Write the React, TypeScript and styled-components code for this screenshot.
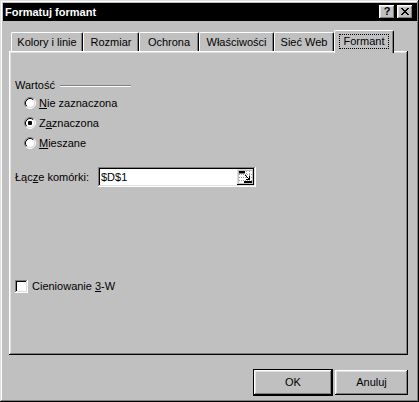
import React from "react";
import styled, { createGlobalStyle } from "styled-components";

const GlobalStyle = createGlobalStyle`
  html, body { margin: 0; padding: 0; background: #c0c0c0; }
  body { font-family: "Liberation Sans", Arial, sans-serif; font-size: 11px; color: #000; }
  * { box-sizing: border-box; }
`;

const raised = `box-shadow: inset -1px -1px #000, inset 1px 1px #fff, inset -2px -2px #808080, inset 2px 2px #dfdfdf;`;
const sunken = `box-shadow: inset -1px -1px #fff, inset 1px 1px #808080, inset -2px -2px #dfdfdf, inset 2px 2px #000;`;

const Window = styled.div`
  width: 419px;
  height: 402px;
  background: #c0c0c0;
  padding: 3px 2px 3px 3px;
  box-shadow: inset -1px -1px #000, inset 1px 1px #dfdfdf, inset -2px -2px #808080, inset 2px 2px #fff;
  display: flex;
  flex-direction: column;
  overflow: hidden;
`;

const TitleBar = styled.div`
  height: 18px;
  background: #000;
  display: flex;
  align-items: center;
  padding: 0 4px 0 2px;
`;

const Title = styled.span`
  flex: 1;
  color: #fff;
  font-weight: bold;
  font-size: 11px;
  line-height: 13px;
`;

const CaptionButtons = styled.div`
  display: flex;
  gap: 2px;
`;

const CaptionButton = styled.div`
  width: 16px;
  height: 14px;
  background: #c0c0c0;
  ${raised}
  display: flex;
  align-items: center;
  justify-content: center;
  font-weight: bold;
  font-size: 11px;
  line-height: 11px;
  padding-bottom: 1px;
`;

const Body = styled.div`
  display: flex;
  flex-direction: column;
  padding: 9px 0 0 6px;
`;

const TabStrip = styled.div`
  display: flex;
  align-items: flex-end;
  height: 21px;
  padding-left: 2px;
`;

const Tab = styled.div<{ $w: number; $active?: boolean }>`
  width: ${(p) => p.$w}px;
  height: ${(p) => (p.$active ? 23 : 19)}px;
  margin-bottom: ${(p) => (p.$active ? -2 : 0)}px;
  position: relative;
  z-index: ${(p) => (p.$active ? 1 : 0)};
  background: #c0c0c0;
  border-top: 1px solid #fff;
  border-left: 1px solid #fff;
  border-right: 1px solid #000;
  border-radius: 2px 2px 0 0;
  box-shadow: inset -1px 0 #808080;
  display: flex;
  justify-content: center;
  align-items: flex-start;
  padding-top: ${(p) => (p.$active ? 3 : 3)}px;
  line-height: 13px;
  white-space: nowrap;
`;

const Focus = styled.span`
  border: 1px dotted #000;
  padding: 0 4px;
  line-height: 13px;
`;

const Panel = styled.div`
  width: 399px;
  height: 304px;
  background: #c0c0c0;
  box-shadow: inset -1px -1px #000, inset 1px 1px #fff, inset -2px -2px #808080, inset 2px 2px #dfdfdf;
  padding: 28px 0 0 6px;
  display: flex;
  flex-direction: column;
`;

const GroupHeader = styled.div`
  display: grid;
  grid-template-columns: 45px 71px;
  align-items: center;
  height: 13px;
  line-height: 13px;
`;

const GroupLine = styled.div`
  height: 2px;
  border-top: 1px solid #808080;
  border-bottom: 1px solid #fff;
`;

const RadioList = styled.div`
  display: flex;
  flex-direction: column;
  margin: 1px 0 0 9px;
`;

const OptionRow = styled.label`
  display: flex;
  align-items: center;
  gap: 3px;
  height: 20px;
  line-height: 13px;
`;

const U = styled.span`
  text-decoration: underline;
`;

const FieldRow = styled.div`
  display: grid;
  grid-template-columns: 83px 158px;
  align-items: center;
  margin-top: 14px;
  line-height: 13px;
`;

const RefInput = styled.div`
  height: 20px;
  background: #fff;
  ${sunken}
  padding: 2px;
  display: flex;
  align-items: center;
`;

const InputText = styled.span`
  flex: 1;
  padding-left: 1px;
  line-height: 13px;
`;

const RefButton = styled.div`
  width: 17px;
  height: 16px;
  display: flex;
`;

const CheckRow = styled.label`
  display: flex;
  align-items: center;
  gap: 4px;
  margin-top: 93px;
  line-height: 13px;
`;

const CheckBox = styled.span`
  width: 13px;
  height: 13px;
  background: #fff;
  ${sunken}
`;

const ButtonRow = styled.div`
  width: 399px;
  display: flex;
  justify-content: flex-end;
  align-items: flex-start;
  gap: 2px;
  margin-top: 14px;
`;

const DialogButton = styled.div<{ $default?: boolean; $w: number }>`
  width: ${(p) => p.$w}px;
  height: ${(p) => (p.$default ? 27 : 25)}px;
  margin-top: ${(p) => (p.$default ? 0 : 1)}px;
  background: #c0c0c0;
  border: ${(p) => (p.$default ? "1px solid #000" : "none")};
  ${raised}
  display: flex;
  align-items: center;
  justify-content: center;
  line-height: 13px;
`;

const Radio = ({ checked }: { checked?: boolean }) => (
  <svg width="12" height="12" viewBox="0 0 12 12">
    <circle cx="6" cy="6" r="4.5" fill="#fff" />
    <path d="M2.11 9.89 A5.5 5.5 0 0 1 9.89 2.11" stroke="#808080" fill="none" />
    <path d="M9.89 2.11 A5.5 5.5 0 0 1 2.11 9.89" stroke="#fff" fill="none" />
    <path d="M2.82 9.18 A4.5 4.5 0 0 1 9.18 2.82" stroke="#000" fill="none" />
    <path d="M9.18 2.82 A4.5 4.5 0 0 1 2.82 9.18" stroke="#dfdfdf" fill="none" />
    {checked && <rect x="4" y="4" width="4" height="4" rx="1" fill="#000" />}
  </svg>
);

const CloseGlyph = () => (
  <svg width="8" height="7" viewBox="0 0 8 7" shapeRendering="crispEdges">
    <path d="M0 0h2v1h-2zM6 0h2v1h-2zM1 1h2v1h-2zM5 1h2v1h-2zM2 2h4v1h-4zM3 3h2v1h-2zM2 4h4v1h-4zM1 5h2v1h-2zM5 5h2v1h-2zM0 6h2v1h-2zM6 6h2v1h-2z" fill="#000" />
  </svg>
);

const RefIcon = () => (
  <svg width="17" height="16" viewBox="0 0 17 16" shapeRendering="crispEdges">
    <rect x="0" y="0" width="17" height="16" fill="#c0c0c0" />
    <rect x="0" y="0" width="16" height="1" fill="#dfdfdf" />
    <rect x="0" y="0" width="1" height="15" fill="#dfdfdf" />
    <rect x="16" y="0" width="1" height="16" fill="#000" />
    <rect x="0" y="15" width="17" height="1" fill="#000" />
    <rect x="2" y="2" width="13" height="12" fill="#fff" />
    <path d="M2 5h13M2 8h13M2 11h13" stroke="#a0a0a0" strokeDasharray="1 1" />
    <path d="M9 2v12M12 2v12" stroke="#a0a0a0" strokeDasharray="1 1" />
    <rect x="2" y="2" width="6" height="2" fill="#000" />
    <rect x="2" y="4" width="6" height="1" fill="#808080" />
    <path d="M8 6h1v1h1v1h1v1h1v-2h1v4h-4v-1h2v-1h-1v-1h-1v-1h-1z" fill="#000" />
    <rect x="7" y="12" width="8" height="2" fill="#000" />
  </svg>
);

const tabs = [
  { label: "Kolory i linie", w: 72 },
  { label: "Rozmiar", w: 56 },
  { label: "Ochrona", w: 60 },
  { label: "Właściwości", w: 75 },
  { label: "Sieć Web", w: 60 },
];

export default function App() {
  return (
    <>
      <GlobalStyle />
      <Window>
        <TitleBar>
          <Title>Formatuj formant</Title>
          <CaptionButtons>
            <CaptionButton>?</CaptionButton>
            <CaptionButton>
              <CloseGlyph />
            </CaptionButton>
          </CaptionButtons>
        </TitleBar>
        <Body>
          <TabStrip>
            {tabs.map((t) => (
              <Tab key={t.label} $w={t.w}>
                {t.label}
              </Tab>
            ))}
            <Tab $w={60} $active>
              <Focus>Formant</Focus>
            </Tab>
          </TabStrip>
          <Panel>
            <GroupHeader>
              <span>Wartość</span>
              <GroupLine />
            </GroupHeader>
            <RadioList>
              <OptionRow>
                <Radio />
                <span>
                  <U>N</U>ie zaznaczona
                </span>
              </OptionRow>
              <OptionRow>
                <Radio checked />
                <span>
                  Z<U>a</U>znaczona
                </span>
              </OptionRow>
              <OptionRow>
                <Radio />
                <span>
                  <U>M</U>ieszane
                </span>
              </OptionRow>
            </RadioList>
            <FieldRow>
              <span>
                Łąc<U>z</U>e komórki:
              </span>
              <RefInput>
                <InputText>$D$1</InputText>
                <RefButton>
                  <RefIcon />
                </RefButton>
              </RefInput>
            </FieldRow>
            <CheckRow>
              <CheckBox />
              <span>
                Cieniowanie <U>3</U>-W
              </span>
            </CheckRow>
          </Panel>
          <ButtonRow>
            <DialogButton $default $w={80}>
              OK
            </DialogButton>
            <DialogButton $w={73}>Anuluj</DialogButton>
          </ButtonRow>
        </Body>
      </Window>
    </>
  );
}
